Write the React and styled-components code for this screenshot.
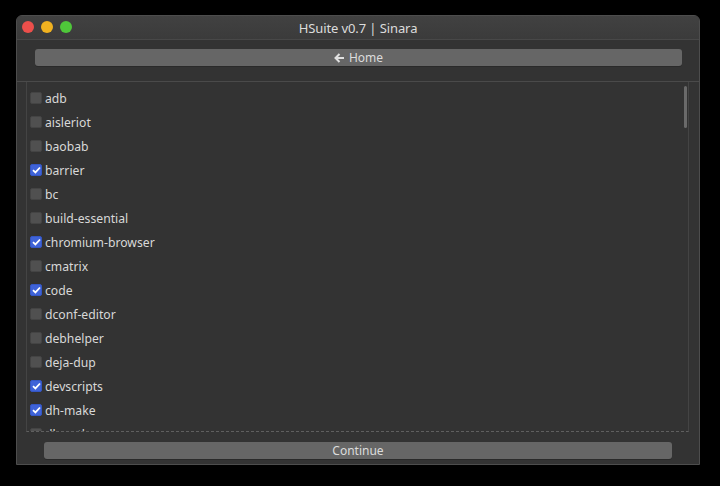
import React from "react";
import styled, { createGlobalStyle } from "styled-components";

const Global = createGlobalStyle`
  html, body { margin: 0; padding: 0; background: #000; }
  body { font-family: "Noto Sans", "Open Sans", sans-serif; }
`;

const Stage = styled.div`
  width: 720px;
  height: 486px;
  padding: 15px 0 0 16px;
  box-sizing: border-box;
`;

const Window = styled.div`
  width: 684px;
  height: 450px;
  box-sizing: border-box;
  border: 1px solid #4d4d4d;
  border-radius: 6px 6px 0 0;
  background: #333333;
  display: flex;
  flex-direction: column;
  overflow: hidden;
`;

const TitleBar = styled.div`
  height: 24px;
  flex: none;
  position: relative;
  display: flex;
  align-items: center;
  justify-content: center;
  background: linear-gradient(#414141, #3b3b3b);
  border-bottom: 1px solid #484848;
  box-sizing: border-box;
`;

const Lights = styled.div`
  position: absolute;
  left: 5px;
  top: 5px;
  display: flex;
  gap: 7px;
`;

const Light = styled.span`
  width: 12px;
  height: 12px;
  border-radius: 50%;
  background: ${(p) => p.$c};
`;

const Title = styled.div`
  color: #dcdcdc;
  font-size: 13px;
  letter-spacing: -0.1px;
`;

const Bar = styled.button`
  display: flex;
  align-items: center;
  justify-content: center;
  gap: 4px;
  width: 100%;
  height: 17px;
  padding: 0;
  border: none;
  border-radius: 3px;
  background: #666666;
  color: #dcdcdc;
  font-family: inherit;
  font-size: 12px;
  box-shadow: 0 1px 0 #2a2a2a;
`;

const TopArea = styled.div`
  flex: none;
  height: 42px;
  padding: 9px 17px 0 18px;
  box-sizing: border-box;
  border-bottom: 1px solid #4a4a4a;
`;

const ListWrap = styled.div`
  flex: none;
  height: 350px;
  padding: 0 10px 0 9px;
  box-sizing: border-box;
`;

const ListBox = styled.div`
  height: 100%;
  box-sizing: border-box;
  border-left: 1px solid #444;
  border-right: 1px solid #444;
  border-bottom: 1px dashed #5f5f5f;
  position: relative;
  overflow: hidden;
  padding: 4px 0 0 3px;
`;

const Scroll = styled.div`
  position: absolute;
  right: 1px;
  top: 4px;
  width: 3px;
  height: 42px;
  border-radius: 2px;
  background: #6a6a6a;
`;

const Row = styled.div`
  height: 24px;
  display: flex;
  align-items: center;
  gap: 3px;
  color: #d8d8d8;
  font-size: 12.2px;
`;

const Box = styled.span`
  width: 12px;
  height: 12px;
  box-sizing: border-box;
  border-radius: 2px;
  display: flex;
  align-items: center;
  justify-content: center;
  background: ${(p) => (p.$on ? "#3f63d8" : "#505050")};
  border: 1px solid ${(p) => (p.$on ? "#3456c4" : "#444")};
`;

const Bottom = styled.div`
  flex: 1;
  padding: 10px 27px 0 27px;
  box-sizing: border-box;
`;

const items = [
  ["adb", 0], ["aisleriot", 0], ["baobab", 0], ["barrier", 1], ["bc", 0],
  ["build-essential", 0], ["chromium-browser", 1], ["cmatrix", 0], ["code", 1],
  ["dconf-editor", 0], ["debhelper", 0], ["deja-dup", 0], ["devscripts", 1],
  ["dh-make", 1], ["dh-python", 0],
];

const Check = () => (
  <svg width="9" height="8" viewBox="0 0 9 8">
    <path d="M1 4.2 L3.4 6.4 L8 1.5" fill="none" stroke="#fff" strokeWidth="1.8" />
  </svg>
);

export default function App() {
  return (
    <>
      <Global />
      <Stage>
        <Window>
          <TitleBar>
            <Lights>
              <Light $c="#ec4f4b" />
              <Light $c="#f1b220" />
              <Light $c="#4fc73a" />
            </Lights>
            <Title>HSuite v0.7 | Sinara</Title>
          </TitleBar>
          <TopArea>
            <Bar>
              <svg width="11" height="10" viewBox="0 0 11 10">
                <path d="M10 5 H2 M5.5 1 L1.5 5 L5.5 9" fill="none" stroke="#e0e0e0" strokeWidth="2" />
              </svg>
              Home
            </Bar>
          </TopArea>
          <ListWrap>
            <ListBox>
              <Scroll />
              {items.map(([name, on]) => (
                <Row key={name}>
                  <Box $on={!!on}>{on ? <Check /> : null}</Box>
                  {name}
                </Row>
              ))}
            </ListBox>
          </ListWrap>
          <Bottom>
            <Bar>Continue</Bar>
          </Bottom>
        </Window>
      </Stage>
    </>
  );
}
